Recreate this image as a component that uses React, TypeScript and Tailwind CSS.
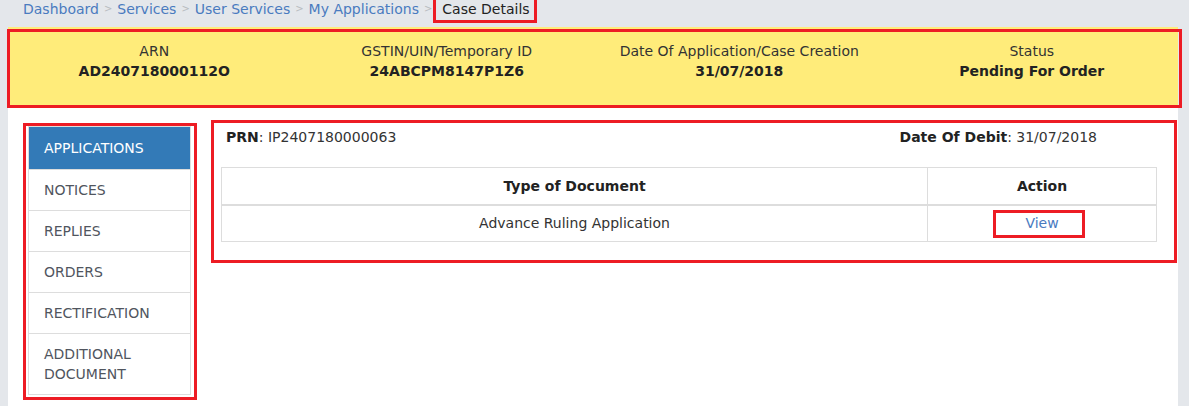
const crumbs = ["Dashboard", "Services", "User Services", "My Applications"];

const summary = [
	{ label: "ARN", value: "AD240718000112O" },
	{ label: "GSTIN/UIN/Temporary ID", value: "24ABCPM8147P1Z6" },
	{ label: "Date Of Application/Case Creation", value: "31/07/2018" },
	{ label: "Status", value: "Pending For Order" },
];

const tabs = ["APPLICATIONS", "NOTICES", "REPLIES", "ORDERS", "RECTIFICATION", "ADDITIONAL DOCUMENT"];

// red annotation boxes drawn over the screenshot
const marks = [
	"left-[433px] top-[-3px] h-[26px] w-[104px]",
	"left-[7px] top-[29px] h-[79px] w-[1175px]",
	"left-[23px] top-[123px] h-[277px] w-[174px]",
	"left-[211px] top-[120px] h-[143px] w-[966px]",
	"left-[993px] top-[210px] h-[28px] w-[92px]",
];

export default function App() {
	return (
		<div
			className="relative h-[406px] w-[1189px] overflow-hidden bg-[#e4e7eb] text-[14px] text-[#333]"
			style={{ fontFamily: '"DejaVu Sans", Verdana, sans-serif' }}
		>
			<div className="flex h-[27px] items-start pl-[23px] leading-[18px]">
				{crumbs.map((c) => (
					<span key={c} className="flex items-center">
						<span className="text-[#4a7bbf]">{c}</span>
						<span className="mx-[5px] text-[10px] text-[#b8bcc0]">&gt;</span>
					</span>
				))}
				<span className="ml-[5px] text-[#222]">Case Details</span>
			</div>

			<div className="ml-[8px] mr-[11px] h-[379px] bg-white">
				<div className="grid h-[80px] grid-cols-4 bg-[#ffec7a] pt-[14px] text-center leading-[20px] text-[#333]">
					{summary.map((s) => (
						<div key={s.label}>
							<div>{s.label}</div>
							<div className="font-bold text-[#222]">{s.value}</div>
						</div>
					))}
				</div>

				<div className="flex items-start">
					<ul className="ml-[20px] mt-[19px] w-[163px] border border-[#ddd] leading-[20px]">
						{tabs.map((t, i) => (
							<li
								key={t}
								className={
									i === 0
										? "bg-[#337ab7] px-[15px] py-[11px] text-white"
										: "border-t border-[#ddd] px-[15px] py-[10px] text-[#50555e]"
								}
							>
								{t === "ADDITIONAL DOCUMENT" ? (
									<>
										ADDITIONAL
										<br />
										DOCUMENT
									</>
								) : (
									t
								)}
							</li>
						))}
					</ul>

					<div className="ml-[20px] mt-[13px] flex-1 pl-[10px] pr-[21px]">
						<div className="flex justify-between pl-[5px] pr-[60px] pt-[7px] leading-[20px]">
							<div>
								<span className="font-bold text-[#222]">PRN</span>: IP2407180000063
							</div>
							<div>
								<span className="font-bold text-[#222]">Date Of Debit</span>: 31/07/2018
							</div>
						</div>

						<table className="mt-[20px] w-full border-collapse border border-[#ddd] leading-[20px]">
							<thead>
								<tr className="border-b-2 border-[#ddd]">
									<th className="h-[37px] border-r border-[#ddd] text-center font-bold text-[#222]">
										Type of Document
									</th>
									<th className="w-[229px] text-center font-bold text-[#222]">Action</th>
								</tr>
							</thead>
							<tbody>
								<tr>
									<td className="h-[37px] border-r border-[#ddd] text-center">Advance Ruling Application</td>
									<td className="text-center text-[#4a7bbf]">View</td>
								</tr>
							</tbody>
						</table>
					</div>
				</div>
			</div>

			{marks.map((m) => (
				<div key={m} className={`pointer-events-none absolute border-[3px] border-[#ed1c24] ${m}`} />
			))}
		</div>
	);
}
